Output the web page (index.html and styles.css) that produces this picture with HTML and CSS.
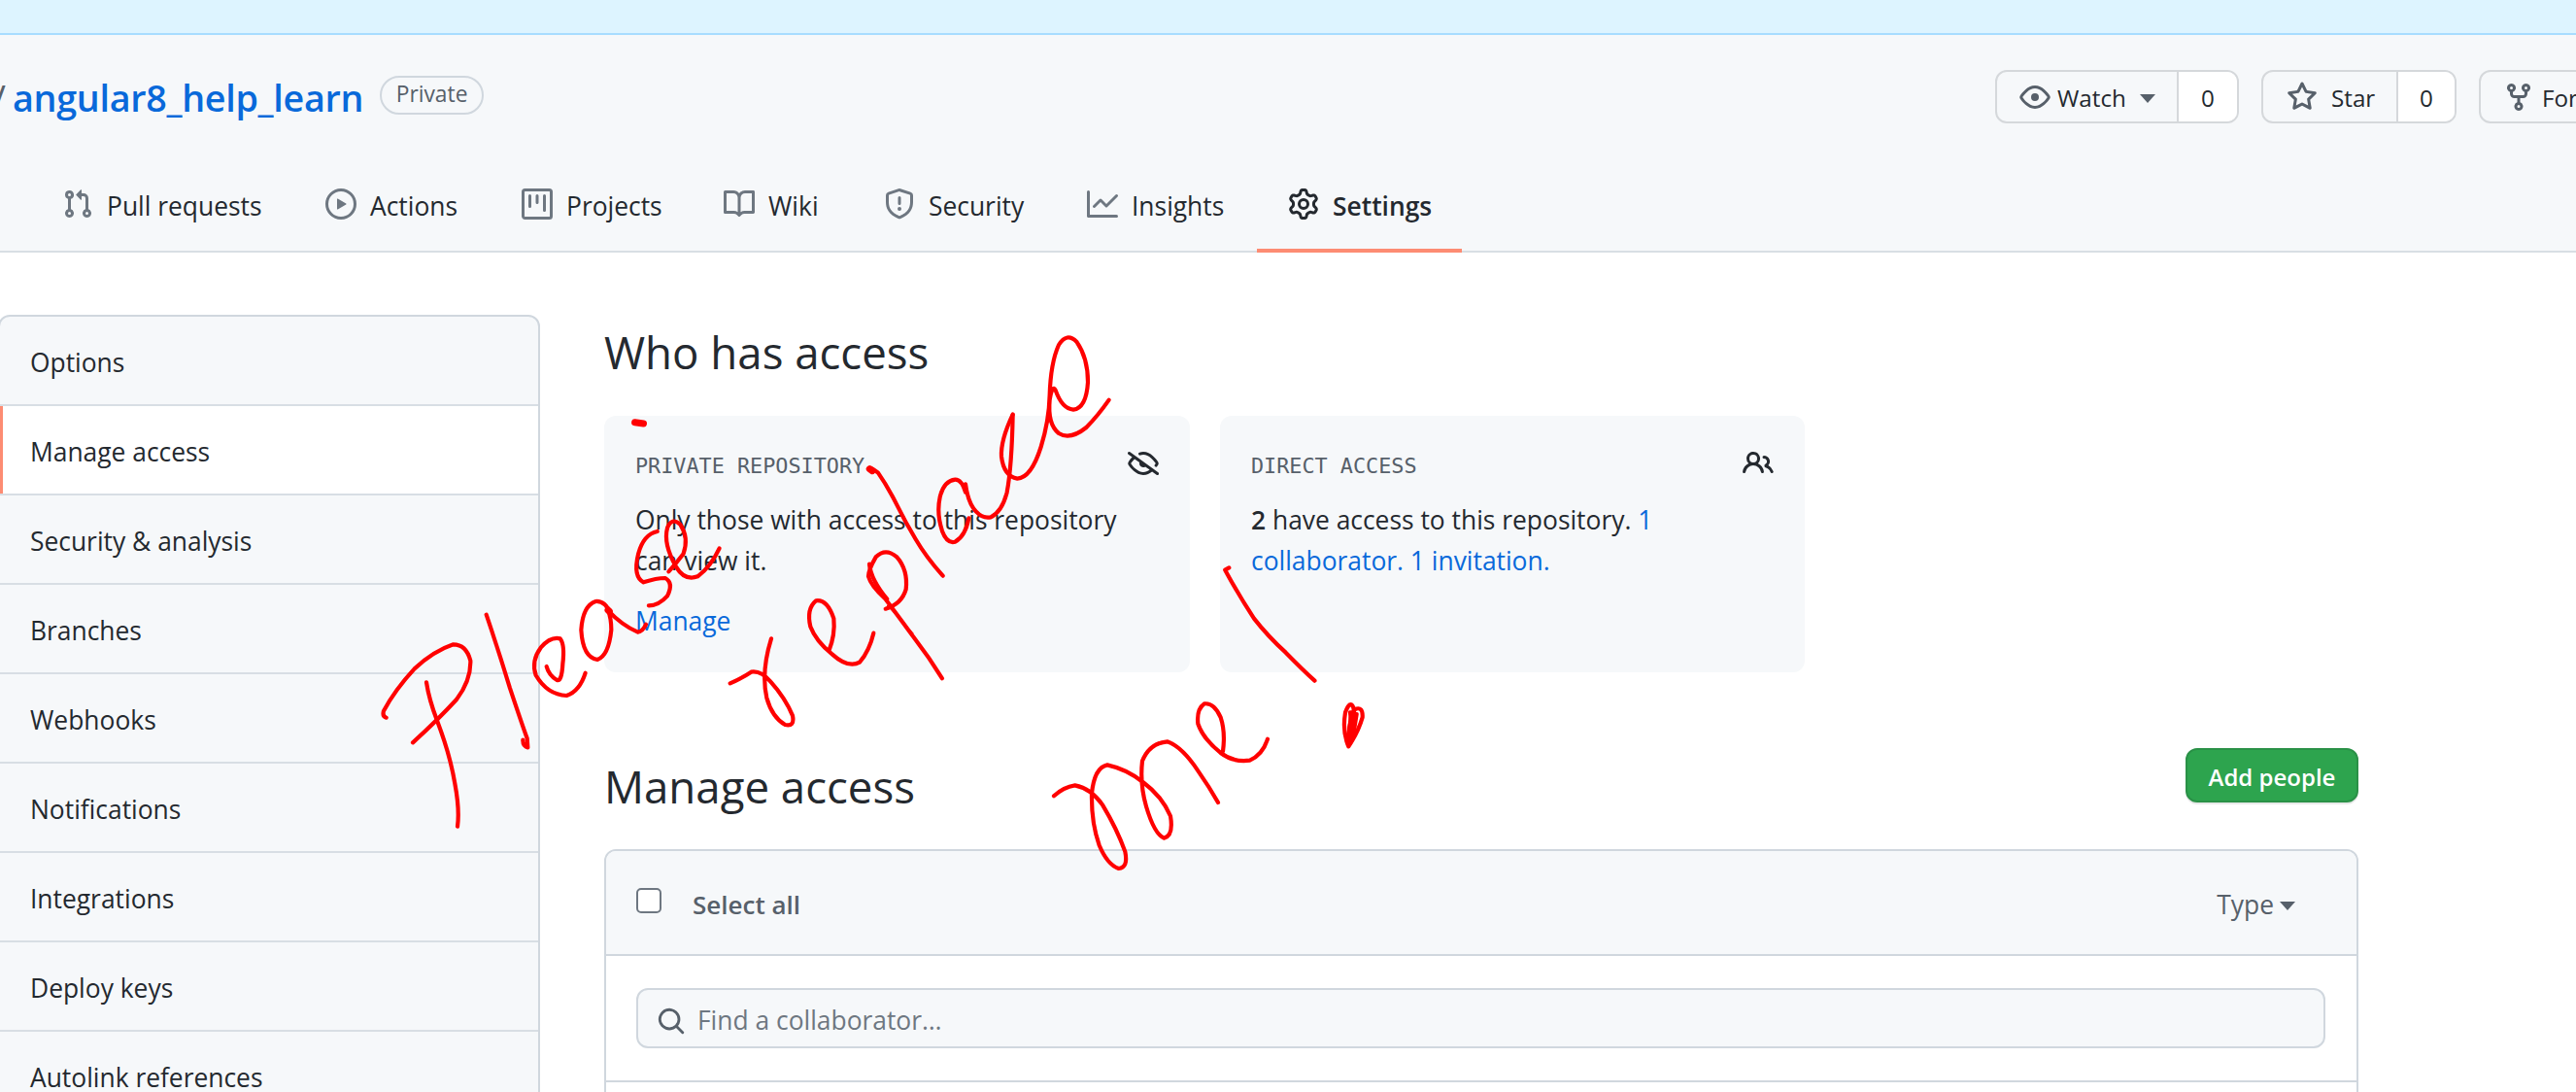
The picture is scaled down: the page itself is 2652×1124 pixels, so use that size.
FILE: index.html
```html
<!DOCTYPE html>
<html lang="en">
<head>
<meta charset="utf-8">
<title>Manage access</title>
<link rel="stylesheet" href="styles.css">
</head>
<body>
<svg class="sprite" width="0" height="0" aria-hidden="true">
  <symbol id="i-pr" viewBox="0 0 16 16"><path d="M7.177 3.073L9.573.677A.25.25 0 0110 .854v4.792a.25.25 0 01-.427.177L7.177 3.427a.25.25 0 010-.354zM3.75 2.5a.75.75 0 100 1.5.75.75 0 000-1.5zm-2.25.75a2.25 2.25 0 113 2.122v5.256a2.251 2.251 0 11-1.5 0V5.372A2.25 2.25 0 011.5 3.25zM11 2.5h-1V4h1a1 1 0 011 1v5.628a2.251 2.251 0 101.5 0V5A2.5 2.5 0 0011 2.5zm1 10.25a.75.75 0 111.5 0 .75.75 0 01-1.5 0zM3.75 12a.75.75 0 100 1.5.75.75 0 000-1.5z"/></symbol>
  <symbol id="i-play" viewBox="0 0 16 16"><path d="M1.5 8a6.5 6.5 0 1113 0 6.5 6.5 0 01-13 0zM8 0a8 8 0 100 16A8 8 0 008 0zM6.379 5.227A.25.25 0 006 5.442v5.117a.25.25 0 00.379.214l4.264-2.559a.25.25 0 000-.428L6.379 5.227z"/></symbol>
  <symbol id="i-project" viewBox="0 0 16 16"><path d="M1.75 0A1.75 1.75 0 000 1.75v12.5C0 15.216.784 16 1.75 16h12.5A1.75 1.75 0 0016 14.25V1.75A1.75 1.75 0 0014.25 0H1.75zM1.5 1.75a.25.25 0 01.25-.25h12.5a.25.25 0 01.25.25v12.5a.25.25 0 01-.25.25H1.75a.25.25 0 01-.25-.25V1.75zM11.75 3a.75.75 0 00-.75.75v7.5a.75.75 0 001.5 0v-7.5a.75.75 0 00-.75-.75zm-8.25.75a.75.75 0 011.5 0v5.5a.75.75 0 01-1.5 0v-5.5zM8 3a.75.75 0 00-.75.75v3.5a.75.75 0 001.5 0v-3.5A.75.75 0 008 3z"/></symbol>
  <symbol id="i-book" viewBox="0 0 16 16"><path d="M0 1.75A.75.75 0 01.75 1h4.253c1.227 0 2.317.59 3 1.501A3.744 3.744 0 0111.006 1h4.245a.75.75 0 01.75.75v10.5a.75.75 0 01-.75.75h-4.507a2.25 2.25 0 00-1.591.659l-.622.621a.75.75 0 01-1.06 0l-.622-.621A2.25 2.25 0 005.258 13H.75a.75.75 0 01-.75-.75V1.75zm8.755 3a2.25 2.25 0 012.25-2.25H14.5v9h-3.757c-.71 0-1.4.201-1.992.572l.004-7.322zm-1.504 7.324l.004-5.073-.002-2.253A2.25 2.25 0 005.003 2.5H1.5v9h3.757a3.75 3.75 0 011.994.574z"/></symbol>
  <symbol id="i-shield" viewBox="0 0 16 16"><path d="M7.467.133a1.75 1.75 0 011.066 0l5.25 1.68A1.75 1.75 0 0115 3.48V7c0 1.566-.32 3.182-1.303 4.682-.983 1.498-2.585 2.813-5.032 3.855a1.7 1.7 0 01-1.33 0c-2.447-1.042-4.049-2.357-5.032-3.855C1.32 10.182 1 8.566 1 7V3.48a1.75 1.75 0 011.217-1.667l5.25-1.68zm.61 1.429a.25.25 0 00-.153 0l-5.25 1.68a.25.25 0 00-.174.238V7c0 1.358.275 2.666 1.057 3.86.784 1.194 2.121 2.34 4.366 3.297a.2.2 0 00.154 0c2.245-.956 3.582-2.104 4.366-3.298C13.225 9.666 13.5 8.36 13.5 7V3.48a.25.25 0 00-.174-.237l-5.25-1.68zM9 10.5a1 1 0 11-2 0 1 1 0 012 0zm-.25-5.75a.75.75 0 10-1.5 0v3a.75.75 0 001.5 0v-3z"/></symbol>
  <symbol id="i-graph" viewBox="0 0 16 16"><path d="M1.5 1.75a.75.75 0 00-1.5 0v12.5c0 .414.336.75.75.75h14.5a.75.75 0 000-1.5H1.5V1.75zm14.28 2.53a.75.75 0 00-1.06-1.06L10 7.94 7.53 5.47a.75.75 0 00-1.06 0L3.22 8.72a.75.75 0 001.06 1.06L7 7.06l2.47 2.47a.75.75 0 001.06 0l5.25-5.25z"/></symbol>
  <symbol id="i-gear" viewBox="0 0 16 16"><path d="M7.429 1.525a6.593 6.593 0 011.142 0c.036.003.108.036.137.146l.289 1.105c.147.56.55.967.997 1.189.174.086.341.183.501.29.417.278.97.423 1.53.27l1.102-.303c.11-.03.175.016.195.046.219.31.41.641.573.989.014.031.022.11-.059.19l-.815.806c-.411.406-.562.957-.53 1.456a4.588 4.588 0 010 .582c-.032.499.119 1.05.53 1.456l.815.806c.08.08.073.159.059.19a6.494 6.494 0 01-.573.99c-.02.029-.086.074-.195.045l-1.103-.303c-.559-.153-1.112-.008-1.529.27-.16.107-.327.204-.5.29-.449.222-.851.628-.998 1.189l-.289 1.105c-.029.11-.101.143-.137.146a6.613 6.613 0 01-1.142 0c-.036-.003-.108-.037-.137-.146l-.289-1.105c-.147-.56-.55-.967-.997-1.189a4.502 4.502 0 01-.501-.29c-.417-.278-.97-.423-1.53-.27l-1.102.303c-.11.03-.175-.016-.195-.046a6.492 6.492 0 01-.573-.989c-.014-.031-.022-.11.059-.19l.815-.806c.411-.406.562-.957.53-1.456a4.587 4.587 0 010-.582c.032-.499-.119-1.05-.53-1.456l-.815-.806c-.08-.08-.073-.159-.059-.19a6.44 6.44 0 01.573-.99c.02-.029.086-.075.195-.045l1.103.303c.559.153 1.112.008 1.529-.27.16-.107.327-.204.5-.29.449-.222.851-.628.998-1.189l.289-1.105c.029-.11.101-.143.137-.146zM8 0c-.236 0-.47.01-.701.03-.743.065-1.29.615-1.458 1.261l-.29 1.106c-.017.066-.078.158-.211.224a5.994 5.994 0 00-.668.386c-.123.082-.233.09-.3.071L3.27 2.776c-.644-.177-1.392.02-1.82.63a7.977 7.977 0 00-.704 1.217c-.315.675-.111 1.422.363 1.891l.815.806c.05.048.098.147.088.294a6.084 6.084 0 000 .772c.01.147-.038.246-.088.294l-.815.806c-.474.469-.678 1.216-.363 1.891.2.428.436.835.704 1.218.428.609 1.176.806 1.82.63l1.103-.303c.066-.019.176-.011.299.071.213.143.436.272.668.386.133.066.194.158.212.224l.289 1.106c.169.646.715 1.196 1.458 1.26a8.094 8.094 0 001.402 0c.743-.064 1.29-.614 1.458-1.26l.29-1.106c.017-.066.078-.158.211-.224a5.98 5.98 0 00.668-.386c.123-.082.233-.09.3-.071l1.102.302c.644.177 1.392-.02 1.82-.63.268-.382.505-.789.704-1.217.315-.675.111-1.422-.364-1.891l-.814-.806c-.05-.048-.098-.147-.088-.294a6.1 6.1 0 000-.772c-.01-.147.039-.246.088-.294l.814-.806c.475-.469.679-1.216.364-1.891a7.992 7.992 0 00-.704-1.218c-.428-.609-1.176-.806-1.82-.63l-1.103.303c-.066.019-.176.011-.299-.071a5.991 5.991 0 00-.668-.386c-.133-.066-.194-.158-.212-.224L10.16 1.29C9.99.645 9.444.095 8.701.031A8.094 8.094 0 008 0zm1.5 8a1.5 1.5 0 11-3 0 1.5 1.5 0 013 0zM11 8a3 3 0 11-6 0 3 3 0 016 0z"/></symbol>
  <symbol id="i-eye" viewBox="0 0 16 16"><path d="M1.679 7.932c.412-.621 1.242-1.75 2.366-2.717C5.175 4.242 6.527 3.5 8 3.5c1.473 0 2.824.742 3.955 1.715 1.124.967 1.954 2.096 2.366 2.717a.119.119 0 010 .136c-.412.621-1.242 1.75-2.366 2.717C10.825 11.758 9.473 12.5 8 12.5c-1.473 0-2.824-.742-3.955-1.715C2.92 9.818 2.09 8.69 1.679 8.068a.119.119 0 010-.136zM8 2c-1.981 0-3.67.992-4.933 2.078C1.797 5.169.88 6.423.43 7.1a1.619 1.619 0 000 1.798c.45.678 1.367 1.932 2.637 3.024C4.329 13.008 6.019 14 8 14c1.981 0 3.67-.992 4.933-2.078 1.27-1.091 2.187-2.345 2.637-3.023a1.619 1.619 0 000-1.798c-.45-.678-1.367-1.932-2.637-3.023C11.671 2.992 9.981 2 8 2zm0 8a2 2 0 100-4 2 2 0 000 4z"/></symbol>
  <symbol id="i-star" viewBox="0 0 16 16"><path d="M8 .25a.75.75 0 01.673.418l1.882 3.815 4.21.612a.75.75 0 01.416 1.279l-3.046 2.97.719 4.192a.75.75 0 01-1.088.791L8 12.347l-3.766 1.98a.75.75 0 01-1.088-.79l.72-4.194L.818 6.374a.75.75 0 01.416-1.28l4.21-.611L7.327.668A.75.75 0 018 .25zm0 2.445L6.615 5.5a.75.75 0 01-.564.41l-3.097.45 2.24 2.184a.75.75 0 01.216.664l-.528 3.084 2.769-1.456a.75.75 0 01.698 0l2.77 1.456-.53-3.084a.75.75 0 01.216-.664l2.24-2.183-3.096-.45a.75.75 0 01-.564-.41L8 2.694v.001z"/></symbol>
  <symbol id="i-fork" viewBox="0 0 16 16"><path d="M5 3.25a.75.75 0 11-1.5 0 .75.75 0 011.5 0zm0 2.122a2.25 2.25 0 10-1.5 0v.878A2.25 2.25 0 005.75 8.5h1.5v2.128a2.251 2.251 0 101.5 0V8.5h1.5a2.25 2.25 0 002.25-2.25v-.878a2.25 2.25 0 10-1.5 0v.878a.75.75 0 01-.75.75h-4.5A.75.75 0 015 6.25v-.878zm3.75 7.378a.75.75 0 11-1.5 0 .75.75 0 011.5 0zm3-8.75a.75.75 0 100-1.5.75.75 0 000 1.5z"/></symbol>
  <symbol id="i-eye-closed" viewBox="0 0 16 16"><path d="M.143 2.31a.75.75 0 011.047-.167l14.5 10.5a.75.75 0 11-.88 1.214l-2.248-1.628C11.346 13.19 9.792 14 8 14c-1.981 0-3.67-.992-4.933-2.078C1.797 10.832.88 9.577.43 8.9a1.618 1.618 0 010-1.797c.353-.533.995-1.42 1.868-2.305L.31 3.357A.75.75 0 01.143 2.31zm3.386 3.378a14.21 14.21 0 00-1.85 2.244.12.12 0 00-.022.068c0 .021.006.045.022.068.412.621 1.242 1.75 2.366 2.717C5.175 11.758 6.527 12.5 8 12.5c1.195 0 2.31-.488 3.29-1.191L9.063 9.695A2 2 0 016.058 7.52l-2.53-1.832zM8 3.5c-.516 0-1.017.09-1.499.251a.75.75 0 11-.473-1.423A6.23 6.23 0 018 2c1.981 0 3.67.992 4.933 2.078 1.27 1.091 2.187 2.345 2.637 3.023a1.619 1.619 0 010 1.798c-.11.166-.248.365-.41.587a.75.75 0 11-1.21-.887c.148-.201.272-.382.371-.53a.119.119 0 000-.137c-.412-.621-1.242-1.75-2.366-2.717C10.825 4.242 9.473 3.5 8 3.5z"/></symbol>
  <symbol id="i-people" viewBox="0 0 16 16"><path d="M5.5 3.5a2 2 0 100 4 2 2 0 000-4zM2 5.5a3.5 3.5 0 115.898 2.549 5.507 5.507 0 013.034 4.084.75.75 0 11-1.482.235 4.001 4.001 0 00-7.9 0 .75.75 0 01-1.482-.236A5.507 5.507 0 013.102 8.05 3.49 3.49 0 012 5.5zM11 4a.75.75 0 100 1.5 1.5 1.5 0 01.666 2.844.75.75 0 00-.416.672v.352a.75.75 0 00.574.73c1.2.289 2.162 1.2 2.522 2.372a.75.75 0 101.434-.44 5.01 5.01 0 00-2.56-3.012A3 3 0 0011 4z"/></symbol>
  <symbol id="i-search" viewBox="0 0 16 16"><path d="M11.5 7a4.499 4.499 0 11-8.998 0A4.499 4.499 0 0111.5 7zm-.82 4.74a6 6 0 111.06-1.06l3.04 3.04a.75.75 0 11-1.06 1.06l-3.04-3.04z"/></symbol>
</svg>

<div class="banner"></div>

<header class="repo-head">
  <div class="title-row">
    <div class="title-group">
      <span class="slash">/</span>
      <a class="repo-name">angular8_help_learn</a>
      <span class="badge">Private</span>
    </div>
    <div class="actions">
      <div class="btn-group">
        <div class="btn btn-watch"><svg class="ico-btn"><use href="#i-eye"/></svg><span>Watch</span><i class="caret caret-watch"></i></div>
        <div class="count count-watch">0</div>
      </div>
      <div class="btn-group">
        <div class="btn btn-star"><svg class="ico-btn"><use href="#i-star"/></svg><span>Star</span></div>
        <div class="count count-star">0</div>
      </div>
      <div class="btn-group">
        <div class="btn btn-fork"><svg class="ico-btn"><use href="#i-fork"/></svg><span>Fork</span></div>
        <div class="count count-star">0</div>
      </div>
    </div>
  </div>
  <nav class="tabs">
    <a class="tab tab-pr"><svg class="ico-tab"><use href="#i-pr"/></svg><span>Pull requests</span></a>
    <a class="tab tab-actions"><svg class="ico-tab"><use href="#i-play"/></svg><span>Actions</span></a>
    <a class="tab tab-projects"><svg class="ico-tab"><use href="#i-project"/></svg><span>Projects</span></a>
    <a class="tab tab-wiki"><svg class="ico-tab"><use href="#i-book"/></svg><span>Wiki</span></a>
    <a class="tab tab-security"><svg class="ico-tab"><use href="#i-shield"/></svg><span>Security</span></a>
    <a class="tab tab-insights"><svg class="ico-tab"><use href="#i-graph"/></svg><span>Insights</span></a>
    <a class="tab tab-active"><svg class="ico-tab"><use href="#i-gear"/></svg><span>Settings</span></a>
  </nav>
</header>

<div class="layout">
  <ul class="side-menu">
    <li class="side-item">Options</li>
    <li class="side-item side-active">Manage access</li>
    <li class="side-item">Security &amp; analysis</li>
    <li class="side-item">Branches</li>
    <li class="side-item">Webhooks</li>
    <li class="side-item">Notifications</li>
    <li class="side-item">Integrations</li>
    <li class="side-item">Deploy keys</li>
    <li class="side-item">Autolink references</li>
  </ul>

  <main class="content">
    <h2 class="heading heading-who">Who has access</h2>
    <div class="cards">
      <section class="card">
        <div class="card-top"><span class="card-label">PRIVATE REPOSITORY</span><svg class="ico-card"><use href="#i-eye-closed"/></svg></div>
        <p class="card-text">Only those with access to this repository<br>can view it.</p>
        <a class="link card-link">Manage</a>
      </section>
      <section class="card">
        <div class="card-top"><span class="card-label">DIRECT ACCESS</span><svg class="ico-card"><use href="#i-people"/></svg></div>
        <p class="card-text"><strong>2</strong> have access to this repository. <a class="link">1<br>collaborator</a><a class="link">.</a> <a class="link">1 invitation</a><a class="link">.</a></p>
      </section>
    </div>

    <div class="manage-head">
      <h2 class="heading heading-manage">Manage access</h2>
      <button class="btn-add">Add people</button>
    </div>

    <div class="box">
      <div class="box-head">
        <label class="select-all"><input class="check" type="checkbox"><span>Select all</span></label>
        <div class="type-menu"><span>Type</span><i class="caret caret-type"></i></div>
      </div>
      <div class="box-search">
        <div class="search-field">
          <svg class="ico-search"><use href="#i-search"/></svg>
          <input class="search-input" type="text" placeholder="Find a collaborator…">
        </div>
      </div>
      <div class="box-row"></div>
    </div>
  </main>
</div>

<svg class="ink" viewBox="0 0 2652 1124" aria-hidden="true">
  <g transform="translate(740 330) scale(.33333)">
    <path d="M462 458C470 452 482 462 492 470Q520 510 548 565Q575 620 608 675Q640 730 692 788"/>
    <path class="blob" d="M466 458L474 464"/>
    <path d="M762 530Q750 490 730 491Q695 495 683 545Q672 595 690 650Q705 690 730 683Q762 665 772 610"/>
    <path d="M762 505Q770 565 795 590Q815 612 840 607Q875 590 890 530Q905 450 908 290"/>
    <path d="M908 290Q870 370 873 420Q880 480 922 488Q965 485 995 390Q1020 310 1022 230Q1025 130 1050 75Q1075 35 1105 65Q1140 115 1140 190Q1135 270 1095 275Q1060 272 1040 215Q1030 195 1022 245Q1015 320 1050 348Q1085 370 1135 330Q1170 295 1205 245"/>
    <path d="M515 890Q565 875 578 830Q585 770 550 730Q515 700 485 730Q462 770 462 790Q470 820 515 860Q560 920 600 975Q650 1040 690 1105"/>
    <path d="M465 752Q470 800 520 860"/>
    <path class="thin" d="M520 880L600 965"/>
    <path d="M478 965Q465 1020 435 1055Q400 1075 350 1030Q300 990 283 945Q270 890 300 865Q335 860 355 920Q360 970 340 1020"/>
  </g>
  <g transform="translate(350 620) scale(.33333)">
    <path d="M1205 250Q1240 235 1270 215Q1300 210 1330 245Q1375 295 1398 350Q1405 385 1375 378Q1335 355 1318 295Q1300 215 1332 112"/>
    <path d="M143 356Q130 352 135 335Q170 270 230 205Q290 150 350 130Q390 130 403 180Q405 240 360 300Q300 365 225 433"/>
    <path d="M267 247Q275 300 300 365Q340 470 355 560Q370 640 363 692"/>
    <path d="M452 38Q490 150 525 265Q560 370 578 420L580 448Q565 445 565 425"/>
    <path d="M638 198Q645 225 670 240Q685 245 688 190Q695 130 680 112Q650 105 620 140Q590 180 605 225Q640 285 700 288Q740 275 758 218"/>
    <path d="M835 35Q820 -5 790 -3Q750 10 745 85Q750 170 795 177Q830 165 838 85Q838 50 828 25Q870 70 920 92Q935 90 945 68"/>
    <path class="blob" d="M828 24L832 28"/>
  </g>
  <g transform="translate(600 330) scale(.44643 .33333)">
    <path class="blob" d="M120 314L140 318"/>
    <path d="M172 651Q140 660 128 720Q115 790 140 808Q170 795 190 795Q210 810 195 850Q175 880 152 880"/>
    <path d="M198 775Q215 750 232 720Q245 670 225 630Q205 605 195 640Q185 690 215 760Q235 805 265 790Q295 760 315 703"/>
  </g>
  <g transform="translate(1240 410) scale(.40816 .33333)">
    <path d="M62 523L52 530Q85 605 125 680Q160 735 205 785Q245 835 278 872"/>
  </g>
  <g transform="translate(1060 690) scale(.33333)">
    <path d="M75 388Q105 360 140 355Q190 365 225 415Q270 490 295 560Q305 610 275 612Q240 600 215 540Q190 470 192 380Q200 300 240 292Q300 305 350 345Q410 390 435 450Q445 510 415 518Q385 505 360 420Q340 350 348 280Q370 225 425 220Q470 235 520 310Q555 360 582 408"/>
    <path d="M597 250Q605 190 590 145Q570 100 540 103Q515 120 520 165Q535 210 590 255Q630 285 680 278Q720 260 735 212"/>
    <path d="M985 235Q965 190 975 130Q990 90 1000 115Q1010 170 985 235Q985 150 1005 120Q1030 110 1028 145Q1015 190 985 235Q995 160 990 130"/>
    <path d="M985 230Q985 180 995 130M990 225Q1005 180 1010 135"/>
  </g>
</svg>
</body>
</html>
```
FILE: styles.css
```css
* { box-sizing: border-box; }
html, body { margin: 0; padding: 0; }
body {
  width: 2652px;
  height: 1124px;
  overflow: hidden;
  position: relative;
  background: #fff;
  color: #24292f;
  font-family: "Open Sans", "Liberation Sans", sans-serif;
  font-size: 26.4px;
  line-height: 42px;
}
.sprite { position: absolute; }
ul { list-style: none; margin: 0; padding: 0; }
svg { fill: currentColor; display: block; flex: none; }
symbol path { fill-rule: evenodd; }

.banner { height: 36px; background: #ddf4ff; border-bottom: 2px solid #a8dcff; }

.repo-head { height: 224px; background: #f6f8fa; box-shadow: inset 0 -2px #d8dee4; padding-top: 36px; }
.title-row { display: flex; height: 55px; }
.title-group { flex: 1; display: flex; align-items: center; overflow: hidden; }
.slash { font-size: 38px; color: #57606a; margin-left: -8px; width: 21px; padding-top: 3px; }
.repo-name { font-size: 37.7px; font-weight: 600; color: #0969da; letter-spacing: -.3px; padding-top: 3px; }
.badge {
  margin-left: 17px; margin-bottom: 4px; height: 40px; width: 107px; display: flex; align-items: center; justify-content: center;
  border: 2px solid #d0d7de; border-radius: 20px; font-size: 22.8px; font-weight: 500; color: #57606a; line-height: 1;
}
.actions { flex: 0 0 598px; display: flex; gap: 23px; overflow: hidden; }
.btn-group { flex: none; display: flex; height: 55px; border: 2px solid #d5d8db; border-radius: 12px; overflow: hidden; background: #f6f8fa; font-size: 24.2px; font-weight: 500; }
.btn { display: flex; align-items: center; border-right: 2px solid #d5d8db; color: #24292f; }
.btn span { padding-top: 3px; }
.btn-watch { width: 187px; padding-left: 23px; }
.btn-watch .ico-btn { margin-right: 7px; }
.btn-star { width: 139px; padding-left: 24px; }
.btn-star .ico-btn { margin-right: 14px; }
.btn-fork { width: 190px; padding-left: 23px; }
.btn-fork .ico-btn { margin-right: 8px; }
.count { display: flex; align-items: center; justify-content: center; background: #fff; font-size: 24.2px; padding-top: 3px; }
.count-watch { width: 60px; }
.count-star { width: 58px; }
.ico-btn { width: 32px; height: 32px; color: #57606a; }
.caret { display: block; width: 0; height: 0; border-style: solid; border-width: 9px 8px 0; border-color: #57606a transparent transparent; }
.caret-watch { margin-left: 14px; margin-top: 4px; }
.caret-type { margin-left: 6px; margin-top: 7px; }

.tabs { display: flex; margin-top: 36px; padding-left: 32px; }
.tab { display: flex; align-items: center; flex: none; height: 97px; padding: 0 0 0 32px; gap: 14px; border-bottom: 4px solid transparent; color: #24292f; white-space: nowrap; }
.tab span { padding-top: 4px; }
.tab-pr { width: 271px; }
.tab-actions { width: 202px; }
.tab-projects { width: 208px; }
.tab-wiki { width: 165px; }
.tab-security { width: 209px; }
.tab-insights { width: 207px; }
.tab-active { width: 211px; font-weight: 600; border-bottom-color: #fd8c73; }
.ico-tab { width: 32px; height: 32px; color: #6e7781; }
.tab-active .ico-tab { color: #24292f; }

.layout { display: flex; gap: 66px; padding-top: 64px; margin-left: -2px; }
.side-menu { flex: 0 0 558px; border: 2px solid #d0d7de; border-radius: 12px; background: #f6f8fa; overflow: hidden; align-self: flex-start; }
.side-item { height: 92px; padding: 3px 0 0 31px; display: flex; align-items: center; border-bottom: 2px solid #d8dee4; color: #24292f; }
.side-active { background: #fff; box-shadow: inset 3px 0 #fd8c73; }

.content { flex: 0 0 1806px; }
.heading { margin: 0; font-size: 45.6px; font-weight: 400; line-height: 60px; color: #24292f; }
.heading-who { margin-top: 8px; margin-bottom: 36px; }
.cards { display: grid; grid-template-columns: 603px 602px; gap: 31px; }
.card { height: 264px; padding: 32px; background: #f6f8fa; border-radius: 12px; }
.card-top { display: flex; justify-content: space-between; align-items: center; height: 36px; margin-bottom: 18px; }
.card-label { font-family: "DejaVu Sans Mono", "Liberation Mono", monospace; font-size: 21.8px; color: #57606a; line-height: 36px; padding-top: 3px; }
.ico-card { width: 32px; height: 32px; color: #24292f; margin-bottom: 2px; }
.card-text { margin: 0; }
.card-text strong { font-weight: 600; }
.link { color: #0969da; }
.card-link { display: block; margin-top: 20px; }

.manage-head { display: flex; justify-content: space-between; align-items: flex-start; height: 56px; margin-top: 78px; margin-bottom: 48px; }
.heading-manage { margin-top: 9px; }
.btn-add {
  width: 178px; height: 56px; background: #2da44e; color: #fff; border: 2px solid #2a9147; border-radius: 12px;
  font-family: inherit; font-size: 24px; font-weight: 600; padding: 2px 0 0; box-shadow: 0 2px 0 rgba(27,31,36,.1);
}

.box { border: 2px solid #d0d7de; border-radius: 12px; overflow: hidden; }
.box-head { height: 108px; background: #f6f8fa; border-bottom: 2px solid #d0d7de; display: flex; align-items: center; justify-content: space-between; padding: 0 63px 0 31px; color: #57606a; }
.select-all { display: flex; align-items: center; font-weight: 600; font-size: 26px; }
.select-all span { padding-top: 3px; }
.check { appearance: none; width: 26px; height: 26px; margin: 0 32px 4px 0; background: #fff; border: 2px solid #6e7781; border-radius: 5px; }
.type-menu { display: flex; align-items: center; }
.type-menu span { padding-top: 4px; }
.box-search { height: 130px; padding: 33px 32px 33px 31px; border-bottom: 2px solid #d0d7de; }
.search-field { display: flex; align-items: center; height: 62px; background: #f6f8fa; border: 2px solid #d0d7de; border-radius: 12px; padding-left: 19px; }
.ico-search { width: 30px; height: 30px; color: #57606a; margin-top: 6px; }
.search-input { flex: 1; min-width: 0; border: 0; background: transparent; outline: 0; padding: 4px 0 0 12px; font: inherit; color: #24292f; }
.search-input::placeholder { color: #6e7781; opacity: 1; }
.box-row { height: 100px; }

.ink { position: absolute; left: 0; top: 0; width: 2652px; height: 1124px; pointer-events: none; }
.ink path { fill: none; stroke: #ff0000; stroke-width: 4.2px; stroke-linecap: round; stroke-linejoin: round; vector-effect: non-scaling-stroke; }
.ink .thin { stroke-width: 1px; }
.ink .blob { stroke-width: 7px; }
```
